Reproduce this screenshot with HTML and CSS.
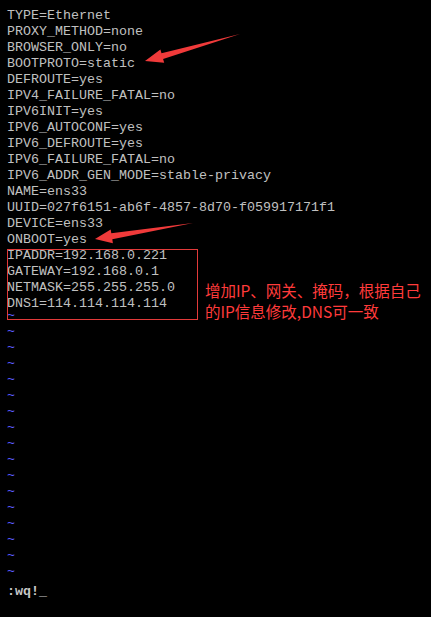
FILE: index.html
```html
<!DOCTYPE html>
<html>
<head>
<title>ifcfg-ens33</title>
<link rel="stylesheet" href="styles.css">
</head>
<body>
<div class="screen">
    <div class="line">TYPE=Ethernet</div>
    <div class="line">PROXY_METHOD=none</div>
    <div class="line">BROWSER_ONLY=no</div>
    <div class="line">BOOTPROTO=static</div>
    <div class="line">DEFROUTE=yes</div>
    <div class="line">IPV4_FAILURE_FATAL=no</div>
    <div class="line">IPV6INIT=yes</div>
    <div class="line">IPV6_AUTOCONF=yes</div>
    <div class="line">IPV6_DEFROUTE=yes</div>
    <div class="line">IPV6_FAILURE_FATAL=no</div>
    <div class="line">IPV6_ADDR_GEN_MODE=stable-privacy</div>
    <div class="line">NAME=ens33</div>
    <div class="line">UUID=027f6151-ab6f-4857-8d70-f059917171f1</div>
    <div class="line">DEVICE=ens33</div>
    <div class="line">ONBOOT=yes</div>
    <div class="line">IPADDR=192.168.0.221</div>
    <div class="line">GATEWAY=192.168.0.1</div>
    <div class="line">NETMASK=255.255.255.0</div>
    <div class="line">DNS1=114.114.114.114</div>
    <div class="line tilde">~</div>
    <div class="line tilde">~</div>
    <div class="line tilde">~</div>
    <div class="line tilde">~</div>
    <div class="line tilde">~</div>
    <div class="line tilde">~</div>
    <div class="line tilde">~</div>
    <div class="line tilde">~</div>
    <div class="line tilde">~</div>
    <div class="line tilde">~</div>
    <div class="line tilde">~</div>
    <div class="line tilde">~</div>
    <div class="line tilde">~</div>
    <div class="line tilde">~</div>
    <div class="line tilde">~</div>
    <div class="line tilde">~</div>
    <div class="line tilde">~</div>
    <div class="line cmd">:wq!<span class="cursor">_</span></div>
</div>

<!-- annotations drawn over the terminal -->
<div class="ip-box"></div>
<div class="note">增加IP、网关、掩码，根据自己<br>的IP信息修改,DNS可一致</div>
<svg class="arrows" width="431" height="617" viewBox="0 0 431 617">
    <polygon points="145,61 160.4,49.4 161.5,53.2 240,34 163.1,59 164.2,62.8" fill="#f03a3a"/>
    <polygon points="95,239 110.7,229.4 111.3,233.3 193,223 112.3,239.3 112.9,243.2" fill="#f03a3a"/>
</svg>
</body>
</html>
```

FILE: styles.css
```css
body {
    margin: 0;
    background-color: #000;
    width: 431px;
    height: 617px;
    overflow: hidden;
    position: relative;
}

.screen {
    padding: 8px 0 0 7px;
    font-family: "Liberation Mono", "DejaVu Sans Mono", monospace;
    font-size: 13.33px;
    color: #c0c0c0;
}

.line {
    height: 16px;
    line-height: 16px;
    white-space: pre;
}

.tilde {
    color: #5c5cff;
    line-height: 8px;
}

.cmd {
    font-weight: bold;
    color: #c8c8c8;
}

.cursor {
    font-weight: normal;
}

.ip-box {
    position: absolute;
    left: 7px;
    top: 249px;
    width: 189px;
    height: 69px;
    border: 1px solid #e23a3a;
}

.note {
    position: absolute;
    left: 205px;
    top: 280px;
    font-family: "Noto Sans CJK SC", sans-serif;
    font-size: 15.5px;
    line-height: 21px;
    color: #ff3b3b;
    white-space: nowrap;
}

.arrows {
    position: absolute;
    left: 0;
    top: 0;
}
```
